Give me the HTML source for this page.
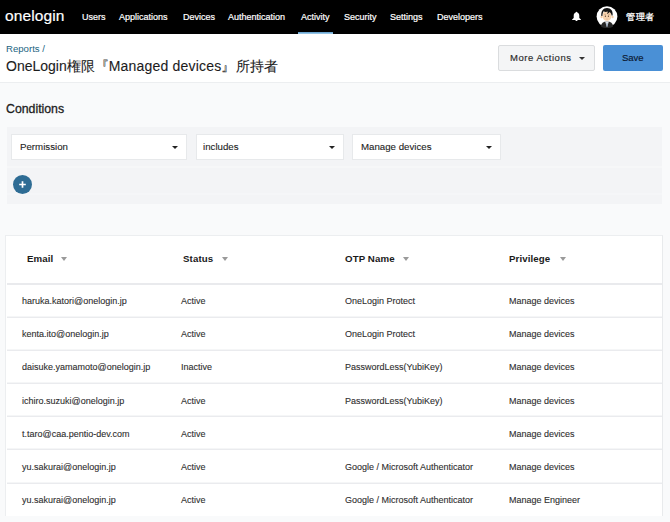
<!DOCTYPE html>
<html><head><meta charset="utf-8">
<style>
*{margin:0;padding:0;box-sizing:border-box}
html,body{width:670px;height:522px;overflow:hidden;background:#f9fafb;font-family:"Liberation Sans",sans-serif;position:relative}
.abs{position:absolute;white-space:nowrap}
#hdr{position:absolute;left:0;top:0;width:670px;height:34px;background:#000}
.logo{left:5px;top:6px;font-size:15.5px;color:#fff;line-height:20px;letter-spacing:0.1px;-webkit-text-stroke:0.2px #fff}
.nav{top:11px;font-size:9px;line-height:12px;color:#fff;-webkit-text-stroke:0.2px #fff}
.uline{left:298px;top:31.5px;width:35px;height:2.5px;background:linear-gradient(#5a98c8,#a6d2ee)}
#top{position:absolute;left:0;top:34px;width:670px;height:49px;background:#fff;border-bottom:1px solid #eceef0}
.crumb{left:6px;top:42.5px;font-size:9.6px;line-height:12px;color:#23647f}
.title{left:6px;top:57px;font-size:14px;line-height:18px;color:#1c1c1c;-webkit-text-stroke:0.1px #1c1c1c}
.btn{position:absolute;height:26px}
.more{left:498px;top:45px;width:97px;background:#f4f5f6;border:1px solid #dadcde;border-radius:2px}
.save{left:603px;top:45px;width:60px;height:26px;background:#4a90d6;border-radius:2px}
.cond{left:6px;top:102px;font-size:12.3px;line-height:14px;color:#1d1d1d;-webkit-text-stroke:0.3px #1d1d1d}
#panel{position:absolute;left:7px;top:127px;width:655px;height:77px;background:#f3f4f6}
.sel{position:absolute;top:134px;height:25.5px;background:#fff;border:1px solid #e7e9eb}
.seltxt{top:141px;font-size:9.7px;line-height:12px;color:#222;-webkit-text-stroke:0.1px #222}
.caret{position:absolute;width:0;height:0;border-left:3px solid transparent;border-right:3px solid transparent;border-top:3px solid #222}
.plus{position:absolute;left:13px;top:175px;width:19px;height:19px;border-radius:50%;background:#2e6c94}
#tbl{position:absolute;left:5px;top:235px;width:658px;height:281px;background:#fff;border:1px solid #eceef0;border-bottom:none;border-right-color:#e8eaec}
.th{top:253px;font-size:9.7px;line-height:12px;color:#1a1a1a;font-weight:bold;letter-spacing:0.1px}
.hcaret{position:absolute;top:257px;width:0;height:0;border-left:3.5px solid transparent;border-right:3.5px solid transparent;border-top:4px solid #9a9a9a}
.rowline{position:absolute;left:7px;width:655px;height:1px;background:#eaebee;box-shadow:0 -1px 0 #f5f6f7}
.td{font-size:9px;line-height:12px;color:#2e2e2e;-webkit-text-stroke:0.1px #2e2e2e}
</style></head><body>
<div id="hdr"></div>
<div class="abs logo">onelogin</div>
<div class="abs nav" style="left:82px">Users</div>
<div class="abs nav" style="left:119px">Applications</div>
<div class="abs nav" style="left:183px">Devices</div>
<div class="abs nav" style="left:228px">Authentication</div>
<div class="abs nav" style="left:301px">Activity</div>
<div class="abs nav" style="left:344px">Security</div>
<div class="abs nav" style="left:390px">Settings</div>
<div class="abs nav" style="left:437px">Developers</div>
<div class="abs uline"></div>
<svg class="abs" style="left:571px;top:11px" width="11" height="11" viewBox="0 0 11 11">
<path d="M5.5 0.8c-0.5 0-0.8 0.4-0.8 0.8C3.3 2 2.7 3.3 2.7 4.8v2.2L1.1 8.4v0.7h8.8V8.4L8.3 7V4.8c0-1.5-0.6-2.8-2-3.2c0-0.4-0.3-0.8-0.8-0.8z M4.4 9h2.2c0 0.55-0.5 0.95-1.1 0.95s-1.1-0.4-1.1-0.95z" fill="#fff"/>
</svg>
<svg class="abs" style="left:596px;top:6px" width="22" height="22" viewBox="0 0 22 22">
<circle cx="11" cy="10.6" r="10.4" fill="#fff"/>
<path d="M4.9 20.5 C5.2 17.3 7.2 15.6 11 15.6 C14.8 15.6 16.8 17.3 17.1 20.5 C15.5 21.6 13.3 22 11 22 C8.7 22 6.5 21.6 4.9 20.5z" fill="#262626"/>
<path d="M9.2 15.6 L11 21.6 L12.8 15.6z" fill="#e8ecf0"/>
<path d="M10.5 16.8 L11.5 16.8 L11.7 20.5 L10.3 20.5z" fill="#8a9bb0"/>
<ellipse cx="5.5" cy="11" rx="1" ry="1.3" fill="#f4cba5"/>
<ellipse cx="16.6" cy="11" rx="1" ry="1.3" fill="#f4cba5"/>
<path d="M6.6 9 C6.6 13.2 8.3 14.8 11 14.8 C13.7 14.8 15.5 13.2 15.5 9 C15.5 6.5 13.5 5.3 11 5.3 C8.5 5.3 6.6 6.5 6.6 9z" fill="#f6d2ae"/>
<path d="M5.3 10 C4.8 5 7.2 2 11 2 C14.8 2 17.2 4.8 16.6 9.6 L15.6 9.4 C15.4 8 14.8 6.8 13.5 6 C12.8 7.2 12 7.8 10.8 8 C11.6 7.3 11.8 6.4 11.6 5.6 C10 6.2 8.3 5.8 7.6 5.3 C7 6.5 6.5 8 6.4 10z" fill="#141414"/>
<path d="M8.2 8.4 L9.9 8.4 M12.2 8.4 L13.9 8.4" stroke="#a08060" stroke-width="0.45"/>
<ellipse cx="9.4" cy="10.2" rx="0.6" ry="0.6" fill="#4a3020"/>
<ellipse cx="12.4" cy="10.2" rx="0.6" ry="0.6" fill="#4a3020"/>
<path d="M10.3 13 Q11 13.4 11.7 13" stroke="#c98a70" stroke-width="0.4" fill="none"/>
</svg>
<div class="abs" style="left:626px;top:11px;font-size:9.3px;line-height:12px;color:#fff;letter-spacing:0.6px;-webkit-text-stroke:0.3px #fff">管理者</div>

<div id="top"></div>
<div class="abs crumb">Reports /</div>
<div class="abs title"><span id="t1">OneLogin</span><span id="t2">権限</span><span id="t3">『</span><span id="t4" style="letter-spacing:0.2px">Managed devices</span><span id="t5">』</span><span id="t6" style="margin-left:1px">所持者</span></div>
<div class="btn more"></div>
<div class="abs" style="left:510px;top:52px;font-size:9.5px;line-height:12px;color:#2a2a2a;letter-spacing:0.55px;-webkit-text-stroke:0.15px #2a2a2a">More Actions</div>
<div class="caret" style="left:579px;top:57px;border-top-color:#333"></div>
<div class="btn save"></div>
<div class="abs" style="left:622px;top:52px;font-size:9.5px;line-height:12px;color:#0a1830;-webkit-text-stroke:0.15px #0a1830">Save</div>

<div class="abs cond">Conditions</div>
<div id="panel"></div>
<div class="abs" style="left:7px;top:165.5px;width:655px;height:2px;background:#f6f7f8"></div>
<div class="abs" style="left:7px;top:193px;width:655px;height:2px;background:#f5f6f8"></div>
<div class="sel" style="left:11px;width:176px"></div>
<div class="abs seltxt" style="left:20px">Permission</div>
<div class="caret" style="left:172px;top:146px"></div>
<div class="sel" style="left:196px;width:148px"></div>
<div class="abs seltxt" style="left:203px">includes</div>
<div class="caret" style="left:329px;top:146px"></div>
<div class="sel" style="left:352px;width:149px"></div>
<div class="abs seltxt" style="left:361px">Manage devices</div>
<div class="caret" style="left:486px;top:146px"></div>
<div class="plus"></div>
<svg class="abs" style="left:13px;top:175px" width="19" height="19" viewBox="0 0 19 19"><path d="M9.5 6.2v6.6M6.2 9.5h6.6" stroke="#fff" stroke-width="1.7"/></svg>

<div id="tbl"></div>
<div class="abs th" style="left:27px">Email</div>
<div class="hcaret" style="left:61px"></div>
<div class="abs th" style="left:183px">Status</div>
<div class="hcaret" style="left:222px"></div>
<div class="abs th" style="left:345px">OTP Name</div>
<div class="hcaret" style="left:403px"></div>
<div class="abs th" style="left:509px">Privilege</div>
<div class="hcaret" style="left:560px"></div>

<div class="rowline" style="top:283px;height:2px;background:#e9eaed;box-shadow:none"></div>
<div class="rowline" style="top:317px"></div>
<div class="rowline" style="top:350px"></div>
<div class="rowline" style="top:383px"></div>
<div class="rowline" style="top:416px"></div>
<div class="rowline" style="top:449px"></div>
<div class="rowline" style="top:483px"></div>

<div class="abs td" style="left:22px;top:295px">haruka.katori@onelogin.jp</div>
<div class="abs td" style="left:181px;top:295px">Active</div>
<div class="abs td" style="left:345px;top:295px">OneLogin Protect</div>
<div class="abs td" style="left:509px;top:295px">Manage devices</div>

<div class="abs td" style="left:22px;top:328px">kenta.ito@onelogin.jp</div>
<div class="abs td" style="left:181px;top:328px">Active</div>
<div class="abs td" style="left:345px;top:328px">OneLogin Protect</div>
<div class="abs td" style="left:509px;top:328px">Manage devices</div>

<div class="abs td" style="left:22px;top:361px">daisuke.yamamoto@onelogin.jp</div>
<div class="abs td" style="left:181px;top:361px">Inactive</div>
<div class="abs td" style="left:345px;top:361px">PasswordLess(YubiKey)</div>
<div class="abs td" style="left:509px;top:361px">Manage devices</div>

<div class="abs td" style="left:22px;top:395px">ichiro.suzuki@onelogin.jp</div>
<div class="abs td" style="left:181px;top:395px">Active</div>
<div class="abs td" style="left:345px;top:395px">PasswordLess(YubiKey)</div>
<div class="abs td" style="left:509px;top:395px">Manage devices</div>

<div class="abs td" style="left:22px;top:428px">t.taro@caa.pentio-dev.com</div>
<div class="abs td" style="left:181px;top:428px">Active</div>
<div class="abs td" style="left:509px;top:428px">Manage devices</div>

<div class="abs td" style="left:22px;top:461px">yu.sakurai@onelogin.jp</div>
<div class="abs td" style="left:181px;top:461px">Active</div>
<div class="abs td" style="left:345px;top:461px">Google / Microsoft Authenticator</div>
<div class="abs td" style="left:509px;top:461px">Manage devices</div>

<div class="abs td" style="left:22px;top:494px">yu.sakurai@onelogin.jp</div>
<div class="abs td" style="left:181px;top:494px">Active</div>
<div class="abs td" style="left:345px;top:494px">Google / Microsoft Authenticator</div>
<div class="abs td" style="left:509px;top:494px">Manage Engineer</div>
</body></html>
